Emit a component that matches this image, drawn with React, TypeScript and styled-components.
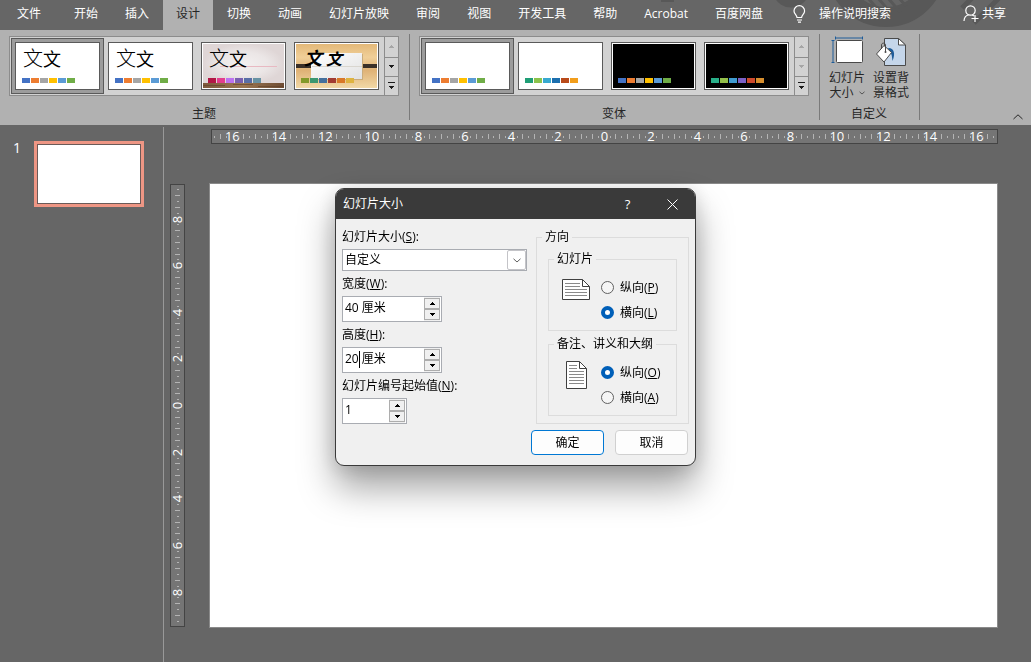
import React from 'react';
import styled, { createGlobalStyle, css } from 'styled-components';

const GlobalStyle = createGlobalStyle`
  *, *::before, *::after { box-sizing: border-box; }
  body {
    margin: 0;
    background: #666;
    font: 12px/16px 'Open Sans', 'Noto Sans CJK SC', sans-serif;
    color: #000;
  }
  button, input, select { font: inherit; color: inherit; }
  button { padding: 0; border: 0; background: none; }
`;

const Page = styled.div`
  min-height: 100vh;
  display: flex;
  flex-direction: column;
`;

/* ---------- Tab bar ---------- */

const TabBar = styled.nav`
  position: relative;
  display: flex;
  height: 30px;
  gap: 1px;
  background: #666;
  color: #fff;
  white-space: nowrap;
`;

const Watermark = styled.svg`
  position: absolute;
  top: 0;
  right: 0;
`;

const Tab = styled.button<{ $active?: boolean; $wide?: boolean }>`
  position: relative;
  padding: 0 ${p => (p.$wide ? '19px 3px 17px' : '13px 3px')};
  ${p => p.$active && css`
    background: #b1b1b1;
    color: #262626;
  `}
`;

const SearchButton = styled(Tab)`
  display: flex;
  align-items: center;
  gap: 13px;
  padding-left: 16px;
`;

const ShareButton = styled(Tab)`
  display: flex;
  align-items: center;
  gap: 3px;
  margin-left: auto;
  padding-right: 25px;
`;

/* ---------- Ribbon ---------- */

const Ribbon = styled.div`
  display: flex;
  height: 95px;
  padding: 4px 0 5px;
  background: #b1b1b1;
  color: #262626;
`;

const Group = styled.section`
  display: flex;
  flex-direction: column;
  justify-content: space-between;
  align-items: center;
  padding: 2px 10px 0 9px;
  border-right: 1px solid #7a7a7a;
`;

const GroupLabel = styled.div`
  line-height: 12px;
`;

const Gallery = styled.div`
  display: flex;
  height: 60px;
  border: 1px solid #8c8c8c;
  background: #d2d2d2;
`;

const GalleryItems = styled.div`
  display: flex;
  padding: 1px;
`;

const GalleryItem = styled.button<{ $selected?: boolean }>`
  width: 93px;
  height: 56px;
  display: grid;
  place-items: center;
  ${p => p.$selected && css`
    background: #9c9c9c;
    border: 1px solid #5a5a5a;
  `}
`;

const Thumb = styled.span<{ $bg: string }>`
  position: relative;
  width: 85px;
  height: 48px;
  display: flex;
  flex-direction: column;
  justify-content: flex-end;
  border: 1px solid #5a5a5a;
  padding: 1px;
  background: ${p => p.$bg} content-box, #fff;
`;

const ThumbArt = styled.svg`
  position: absolute;
  inset: 1px;
`;

const Sample = styled.span<{ $brush?: boolean }>`
  position: relative;
  display: flex;
  align-items: baseline;
  gap: ${p => (p.$brush ? 4 : 0)}px;
  padding-left: ${p => (p.$brush ? 8 : 6)}px;
  font-family: 'Noto Sans CJK SC', sans-serif;
  font-size: ${p => (p.$brush ? 18 : 20)}px;
  font-weight: ${p => (p.$brush ? 700 : 300)};
  font-style: ${p => (p.$brush ? 'italic' : 'normal')};
  line-height: 28px;
  color: #000;
  small {
    font-size: ${p => (p.$brush ? 16 : 18)}px;
    font-weight: ${p => (p.$brush ? 700 : 400)};
  }
`;

const Swatches = styled.span`
  position: relative;
  display: flex;
  gap: 1px;
  padding: 6px 0 5px 5px;
`;

const Swatch = styled.i<{ $color: string }>`
  width: 8px;
  height: 5px;
  background: ${p => p.$color};
`;

const Scroller = styled.div`
  display: grid;
  grid-template-rows: 20px 19px 19px;
  width: 14px;
`;

const ScrollButton = styled.button<{ $off?: boolean }>`
  display: grid;
  place-items: center;
  border-left: 1px solid #8c8c8c;
  color: ${p => (p.$off ? '#a6a6a6' : '#1c1c1c')};
  & + & { border-top: 1px solid #8c8c8c; }
`;

const Tools = styled.div`
  display: flex;
  gap: 8px;
`;

const Tool = styled.button`
  width: 36px;
  display: flex;
  flex-direction: column;
  align-items: center;
  line-height: 15px;
  white-space: nowrap;
  svg { flex: none; }
`;

const ToolCaption = styled.span`
  display: flex;
  align-items: center;
  gap: 5px;
`;

const Collapse = styled.button`
  align-self: flex-end;
  margin-left: auto;
  padding-right: 8px;
  line-height: 8px;
`;

/* ---------- Workspace ---------- */

const Workspace = styled.main`
  flex: 1;
  display: flex;
  padding-top: 2px;
`;

const SlidePane = styled.aside`
  width: 164px;
  flex: none;
  display: flex;
  align-items: flex-start;
  gap: 14px;
  padding: 14px 0 0 13px;
  border-right: 1px solid #999;
  color: #fff;
`;

const SlideNumber = styled.span`
  width: 7px;
  font-size: 14px;
  line-height: 14px;
`;

const SlideThumb = styled.button`
  width: 110px;
  height: 66px;
  border: 3px solid #ee9684;
  background: #fff;
  box-shadow: inset 0 0 0 1px #6b5a58;
`;

const Editor = styled.div`
  flex: 1;
  min-width: 0;
  display: grid;
  grid-template-columns: 15px 1fr;
  grid-template-rows: 15px auto;
  gap: 39px 24px;
  align-content: start;
  padding: 2px 33px 34px 6px;
`;

const rulerFrame = css`
  display: flex;
  border: 1px solid #444;
  background: #757575;
  color: #fff;
`;

const TopRuler = styled.div`
  ${rulerFrame}
  grid-column: 2;
  margin-left: 2px;
`;

const SideRuler = styled.div`
  ${rulerFrame}
  margin: 1px 0;
`;

const Marks = styled.div<{ $vertical?: boolean }>`
  flex: 1;
  display: flex;
  flex-direction: ${p => (p.$vertical ? 'column' : 'row')};
  padding: ${p => (p.$vertical ? '2px 0' : '0')};
`;

const Mark = styled.span<{ $length: number; $vertical?: boolean }>`
  flex: 1 1 0;
  min-width: 0;
  min-height: 0;
  display: flex;
  align-items: center;
  justify-content: center;
  &::before {
    content: '';
    flex: none;
    width: ${p => (p.$vertical ? p.$length : 1)}px;
    height: ${p => (p.$vertical ? 1 : p.$length)}px;
    background: #b4b4b4;
  }
`;

const NumberMark = styled.span<{ $vertical?: boolean }>`
  flex: 1 1 0;
  min-width: 0;
  min-height: 0;
  display: flex;
  align-items: center;
  justify-content: center;
  font-size: 13px;
  line-height: 13px;
  b {
    font-weight: 400;
    ${p => p.$vertical && 'transform: rotate(-90deg);'}
  }
`;

const Slide = styled.div`
  aspect-ratio: 789 / 445;
  border: 1px solid #8a8a8a;
  background: #fff;
`;

/* ---------- Dialog ---------- */

const DialogLayer = styled.div`
  position: fixed;
  inset: 0;
  display: flex;
  justify-content: center;
  align-items: flex-start;
  padding-top: 188px;
`;

const Dialog = styled.form`
  width: 361px;
  border: 1px solid #3a3a3a;
  border-radius: 9px;
  background: #f0f0f0;
  box-shadow: 0 22px 36px rgba(0, 0, 0, 0.36), 0 2px 20px rgba(0, 0, 0, 0.14);
`;

const TitleBar = styled.header`
  display: flex;
  align-items: center;
  height: 30px;
  padding-left: 7px;
  border-radius: 8px 8px 0 0;
  background: #3a3a3a;
  color: #fff;
`;

const TitleText = styled.span`
  flex: 1;
`;

const TitleButton = styled.button`
  width: 45px;
  height: 30px;
  display: grid;
  place-items: center;
  font-size: 13px;
`;

const Columns = styled.div`
  display: flex;
  justify-content: space-between;
  align-items: flex-start;
  padding: 5px 6px 6px;
`;

const Fields = styled.div`
  width: 185px;
  display: flex;
  flex-direction: column;
  align-items: flex-start;
`;

const Caption = styled.label`
  line-height: 25px;
`;

const SelectBox = styled.div`
  width: 100%;
  height: 22px;
  display: grid;
  grid-template-columns: 1fr 19px;
  border: 1px solid #a9acb2;
  background: #fff;
  select {
    grid-area: 1 / 1 / 2 / 3;
    appearance: none;
    border: 0;
    padding: 0 2px;
    background: none;
    outline: 0;
  }
`;

const SelectArrow = styled.span`
  grid-area: 1 / 2;
  display: grid;
  place-items: center;
  border: 1px solid #c4c4c8;
  border-radius: 2px;
  pointer-events: none;
`;

const SpinBox = styled.div<{ $width: number }>`
  position: relative;
  width: ${p => p.$width}px;
  height: 26px;
  display: flex;
  padding-right: 1px;
  border: 1px solid #a9acb2;
  background: #fff;
  input {
    flex: 1;
    min-width: 0;
    border: 0;
    padding: 0 2px 2px;
    background: none;
    outline: 0;
  }
`;

const SpinButtons = styled.div`
  width: 16px;
  display: grid;
  grid-template-rows: 1fr 1fr;
  padding: 1px 0;
  background: #f0f0f0;
  button {
    display: grid;
    place-items: center;
    border: 1px solid #adadad;
    background: #f0f0f0;
  }
`;

const TextCursor = styled.i`
  position: absolute;
  left: 16px;
  top: 3px;
  width: 1px;
  height: 17px;
  background: #000;
`;

const Box = styled.fieldset`
  min-width: 0;
  margin: 0;
  padding: 0 5px;
  border: 1px solid #dcdcdc;
  legend {
    padding: 0 3px;
    line-height: 14px;
  }
`;

const Orientation = styled(Box)`
  width: 153px;
  margin-top: 6px;
`;

const Boxes = styled.div`
  display: flex;
  flex-direction: column;
  gap: 6px;
  padding: 8px 6px 7px;
`;

const Choices = styled.div`
  display: grid;
  grid-template-columns: 44px 1fr;
  column-gap: 3px;
  padding: 9px 0 5px;
`;

const PaperIcon = styled.div`
  height: 29px;
  display: grid;
  place-items: center;
`;

const Choice = styled.label`
  display: flex;
  align-items: center;
  gap: 6px;
  height: 25px;
  white-space: nowrap;
  input {
    appearance: none;
    width: 13px;
    height: 13px;
    margin: 0;
    border: 1px solid #5f5f5f;
    border-radius: 50%;
    background: #f5f5f5;
  }
  input:checked {
    border: 4px solid #005fb8;
    background: #fff;
  }
`;

const Actions = styled.footer`
  display: flex;
  justify-content: flex-end;
  gap: 11px;
  padding: 0 7px 10px;
`;

const ActionButton = styled.button<{ $primary?: boolean }>`
  width: 73px;
  height: 25px;
  border: 1px solid ${p => (p.$primary ? '#0078d4' : '#d0d0d0')};
  border-radius: 4px;
  background: #fdfdfd;
`;

/* ---------- Drawings ---------- */

const Triangle = ({ up, bar }: { up?: boolean; bar?: boolean }) => (
  <svg width="7" height={bar ? 8 : 4} fill="currentColor" shapeRendering="crispEdges">
    {bar && <path d="M0 0h7v1H0z" />}
    <path d={up ? 'M3 0h1v1h1v1h1v1H1V2h1V1h1z' : bar ? 'M1 4h5v1H5v1H4v1H3V6H2V5H1z' : 'M1 0h5v1H5v1H4v1H3V2H2V1H1z'} />
  </svg>
);

const Chevron = ({ up, size = 10, color = 'currentColor' }: { up?: boolean; size?: number; color?: string }) => (
  <svg width={size} height={size / 2 + 1} fill="none" stroke={color} strokeWidth="1">
    <path d={up ? `M0.5 ${size / 2}L${size / 2} 0.8L${size - 0.5} ${size / 2}` : `M0.5 0.8L${size / 2} ${size / 2}L${size - 0.5} 0.8`} />
  </svg>
);

const Bulb = () => (
  <svg width="13" height="18" fill="none" stroke="#fff" strokeWidth="1.2">
    <path d="M4 12.5c0-2.3-3-3.500-3-6.500a5.300 5.300 0 0 1 10.600 0c0 3-3 4.200-3 6.500zM4 15h5M5 17.200h3" />
  </svg>
);

const PersonPlus = () => (
  <svg width="16" height="17" fill="none" stroke="#fff" strokeWidth="1.2">
    <circle cx="7.500" cy="5.500" r="4.700" />
    <path d="M1 16c.2-3.500 2-5.500 4.500-6M9 9.800c.8.300 1.200.6 1.800 1.200M8.500 13.500h7M12 10v7" />
  </svg>
);

const SlideSizeIcon = () => (
  <svg width="32" height="34" fill="none">
    <path d="M4.500 .5v3M31.500 .5v3M4.500 2h27M.5 4.500h3M.5 26.500h3M2 4.500v22" stroke="#1f5c99" />
    <rect x="5.500" y="4.500" width="26" height="22" rx="1" fill="#fff" stroke="#4a4a4a" />
  </svg>
);

const BackgroundIcon = () => (
  <svg width="32" height="34" fill="none">
    <path d="M9.500 2.500h14l7 6.500v20.500h-21z" fill="#c5d6ea" stroke="#4a4a4a" />
    <path d="M23.500 2.500v6.500h7z" fill="#fff" stroke="#4a4a4a" />
    <path d="M13 12c5.500-.5 8 5 4.500 13-.5-4-.5-7-2.500-9z" fill="#1f5c99" />
    <path d="M9 9.500l7.500 7L9 26l-7.500-8z" fill="#fff" stroke="#4a4a4a" />
    <path d="M6.500 13V9c0-2.500 4-2.500 4 0v7" stroke="#4a4a4a" />
    <circle cx="10.500" cy="16" r="1" fill="#4a4a4a" />
  </svg>
);

const PaperLandscape = () => (
  <svg width="28" height="21" fill="none">
    <path d="M.5 .5h20l7 7v13H.5z" fill="#fff" stroke="#404040" />
    <path d="M20.500 .5v7h7" stroke="#404040" />
    <path d="M3 4.500h15M3 7.500h15M3 10.500h22M3 13.500h22M3 16.500h22" stroke="#8a8a8a" />
  </svg>
);

const PaperPortrait = () => (
  <svg width="21" height="28" fill="none">
    <path d="M.5 .5h13l7 7v20H.5z" fill="#fff" stroke="#404040" />
    <path d="M13.500 .5v7h7" stroke="#404040" />
    <path d="M3 4.500h8M3 7.500h8M3 10.500h15M3 13.500h15M3 16.500h15M3 19.500h15M3 22.500h15" stroke="#8a8a8a" />
  </svg>
);

const WoodFloorArt = () => (
  <ThumbArt width="81" height="44">
    <defs>
      <radialGradient id="wall"><stop offset="0" stopColor="#f3f0f0" /><stop offset=".6" stopColor="#ebe6e6" /><stop offset="1" stopColor="#dfd6d6" /></radialGradient>
      <linearGradient id="floor"><stop offset="0" stopColor="#7d5a3c" /><stop offset=".5" stopColor="#9a7550" /><stop offset="1" stopColor="#6e4c33" /></linearGradient>
    </defs>
    <rect width="81" height="40" fill="url(#wall)" />
    <rect x="17" y="22" width="57" height="1" fill="#e8b9c2" />
    <rect y="39" width="81" height="5" fill="url(#floor)" />
    <path d="M0 41.500h22M30 40.500h20M55 42.500h26" stroke="#5f4029" opacity=".6" />
  </ThumbArt>
);

const WoodCardArt = () => (
  <ThumbArt width="81" height="44">
    <defs>
      <linearGradient id="wood" x2="0" y2="1"><stop offset="0" stopColor="#e3b878" /><stop offset=".3" stopColor="#f0cf98" /><stop offset=".6" stopColor="#dfb276" /><stop offset="1" stopColor="#f1d8a6" /></linearGradient>
      <linearGradient id="card" x2="1" y2="1"><stop offset="0" stopColor="#fff" /><stop offset="1" stopColor="#e2e2e2" /></linearGradient>
    </defs>
    <rect width="81" height="44" fill="url(#wood)" />
    <rect y="20" width="17" height="4" fill="#3a3028" />
    <rect x="64" y="20" width="17" height="4" fill="#3a3028" />
    <rect x="16" y="10" width="51" height="26" fill="#c9ac7c" />
    <rect x="15" y="9" width="51" height="26" fill="url(#card)" />
    <path d="M16 22.500h50" stroke="#d9d6cf" />
  </ThumbArt>
);

/* ---------- Data ---------- */

const office = ['#4472c4', '#ed7d31', '#a5a5a5', '#ffc000', '#5b9bd5', '#70ad47'];

const themes = [
  { bg: '#fff', colors: office },
  { bg: '#fff', colors: office },
  { bg: '#e9e3e3', colors: ['#b31745', '#e33d8e', '#bc72f0', '#795fb0', '#586ea6', '#6892a3'], art: <WoodFloorArt /> },
  { bg: '#e3b878', colors: ['#83992a', '#3c9770', '#44709d', '#a23c33', '#d97828', '#deb340'], art: <WoodCardArt />, brush: true },
];

const variants = [
  { bg: '#fff', colors: office },
  { bg: '#fff', colors: ['#1f9e76', '#8cc34b', '#37a9d0', '#1c6fae', '#b94a1a', '#f29e1c'] },
  { bg: '#000', colors: office },
  { bg: '#000', colors: ['#28ae88', '#93bf4a', '#3f9bd0', '#7a60c6', '#cd4a2c', '#d68e2e'] },
];

const solid = (c: string) => `linear-gradient(${c}, ${c})`;

const tabs = ['文件', '开始', '插入', '设计', '切换', '动画', '幻灯片放映', '审阅', '视图', '开发工具', '帮助', 'Acrobat', '百度网盘'];

const SwatchRow = ({ colors }: { colors: string[] }) => (
  <Swatches>{colors.map(c => <Swatch key={c} $color={c} />)}</Swatches>
);

const GalleryScroller = ({ downOff }: { downOff?: boolean }) => (
  <Scroller>
    <ScrollButton type="button" aria-label="向上" $off><Triangle up /></ScrollButton>
    <ScrollButton type="button" aria-label="向下" $off={downOff}><Triangle /></ScrollButton>
    <ScrollButton type="button" aria-label="其他"><Triangle bar /></ScrollButton>
  </Scroller>
);

const RulerMarks = ({ quarters, vertical }: { quarters: number; vertical?: boolean }) => (
  <Marks $vertical={vertical}>
    {Array.from({ length: quarters * 2 + 1 }, (_, i) => {
      const q = i - quarters;
      if (q % 8 === 0) return <NumberMark key={q} $vertical={vertical}><b>{Math.abs(q / 4)}</b></NumberMark>;
      return <Mark key={q} $vertical={vertical} $length={q % 2 === 0 ? 5 : 2} />;
    })}
  </Marks>
);

const Spin = ({ id, value, width = 100, cursor }: { id: string; value: string; width?: number; cursor?: boolean }) => (
  <SpinBox $width={width}>
    <input id={id} defaultValue={value} />
    {cursor && <TextCursor />}
    <SpinButtons>
      <button type="button" aria-label="增加"><Triangle up /></button>
      <button type="button" aria-label="减少"><Triangle /></button>
    </SpinButtons>
  </SpinBox>
);

export default function App() {
  return (
    <Page>
      <GlobalStyle />
      <TabBar>
        <Watermark width="380" height="30" aria-hidden="true">
          <g fill="none" stroke="#585858">
            <circle cx="235" cy="-33" r="50" strokeWidth="20" />
            <path d="M128 -6a13 13 0 0 0 24 0" strokeWidth="11" />
            <path d="M208 -2l10 10M217 -2l12 14M227 -2l12 14M237 -2l12 14M248 -2l7 8" strokeWidth="3" />
            <path d="M311 8l12-12M323 23l27-27" strokeWidth="5" />
          </g>
          <path d="M10 0h13v2H10z" fill="#585858" />
        </Watermark>
        {tabs.map((t, i) => <Tab key={t} type="button" $wide={i === 0} $active={t === '设计'}>{t}</Tab>)}
        <SearchButton type="button"><Bulb />操作说明搜索</SearchButton>
        <ShareButton type="button"><PersonPlus />共享</ShareButton>
      </TabBar>

      <Ribbon>
        <Group>
          <Gallery>
            <GalleryItems>
              {themes.map((t, i) => (
                <GalleryItem key={i} type="button" $selected={i === 0}>
                  <Thumb $bg={solid(t.bg)}>
                    {t.art}
                    <Sample $brush={t.brush}>文<small>文</small></Sample>
                    <SwatchRow colors={t.colors} />
                  </Thumb>
                </GalleryItem>
              ))}
            </GalleryItems>
            <GalleryScroller />
          </Gallery>
          <GroupLabel>主题</GroupLabel>
        </Group>
        <Group>
          <Gallery>
            <GalleryItems>
              {variants.map((v, i) => (
                <GalleryItem key={i} type="button" aria-label={`变体 ${i + 1}`} $selected={i === 0}>
                  <Thumb $bg={solid(v.bg)}><SwatchRow colors={v.colors} /></Thumb>
                </GalleryItem>
              ))}
            </GalleryItems>
            <GalleryScroller downOff />
          </Gallery>
          <GroupLabel>变体</GroupLabel>
        </Group>
        <Group>
          <Tools>
            <Tool type="button">
              <SlideSizeIcon />
              <span>幻灯片</span>
              <ToolCaption>大小 <Chevron size={6} color="#555" /></ToolCaption>
            </Tool>
            <Tool type="button">
              <BackgroundIcon />
              <span>设置背</span>
              <span>景格式</span>
            </Tool>
          </Tools>
          <GroupLabel>自定义</GroupLabel>
        </Group>
        <Collapse type="button" aria-label="折叠功能区"><Chevron up /></Collapse>
      </Ribbon>

      <Workspace>
        <SlidePane>
          <SlideNumber>1</SlideNumber>
          <SlideThumb type="button" aria-label="幻灯片 1" />
        </SlidePane>
        <Editor>
          <TopRuler><RulerMarks quarters={67} /></TopRuler>
          <SideRuler><RulerMarks quarters={37} vertical /></SideRuler>
          <Slide />
        </Editor>
      </Workspace>

      <DialogLayer>
        <Dialog role="dialog" aria-label="幻灯片大小">
          <TitleBar>
            <TitleText>幻灯片大小</TitleText>
            <TitleButton type="button">?</TitleButton>
            <TitleButton type="button" aria-label="关闭">
              <svg width="11" height="11" stroke="#fff"><path d="M.5 .5l10 10M10.500 .5l-10 10" /></svg>
            </TitleButton>
          </TitleBar>
          <Columns>
            <Fields>
              <Caption htmlFor="size">幻灯片大小(<u>S</u>):</Caption>
              <SelectBox>
                <select id="size"><option>自定义</option></select>
                <SelectArrow><Chevron size={8} color="#606060" /></SelectArrow>
              </SelectBox>
              <Caption htmlFor="width">宽度(<u>W</u>):</Caption>
              <Spin id="width" value="40 厘米" />
              <Caption htmlFor="height">高度(<u>H</u>):</Caption>
              <Spin id="height" value="20 厘米" cursor />
              <Caption htmlFor="start">幻灯片编号起始值(<u>N</u>):</Caption>
              <Spin id="start" value="1" width={65} />
            </Fields>
            <Orientation>
              <legend>方向</legend>
              <Boxes>
                <Box>
                  <legend>幻灯片</legend>
                  <Choices>
                    <PaperIcon><PaperLandscape /></PaperIcon>
                    <div>
                      <Choice><input type="radio" name="slide" /><span>纵向(<u>P</u>)</span></Choice>
                      <Choice><input type="radio" name="slide" defaultChecked /><span>横向(<u>L</u>)</span></Choice>
                    </div>
                  </Choices>
                </Box>
                <Box>
                  <legend>备注、讲义和大纲</legend>
                  <Choices>
                    <PaperIcon><PaperPortrait /></PaperIcon>
                    <div>
                      <Choice><input type="radio" name="notes" defaultChecked /><span>纵向(<u>O</u>)</span></Choice>
                      <Choice><input type="radio" name="notes" /><span>横向(<u>A</u>)</span></Choice>
                    </div>
                  </Choices>
                </Box>
              </Boxes>
            </Orientation>
          </Columns>
          <Actions>
            <ActionButton type="button" $primary>确定</ActionButton>
            <ActionButton type="button">取消</ActionButton>
          </Actions>
        </Dialog>
      </DialogLayer>
    </Page>
  );
}
